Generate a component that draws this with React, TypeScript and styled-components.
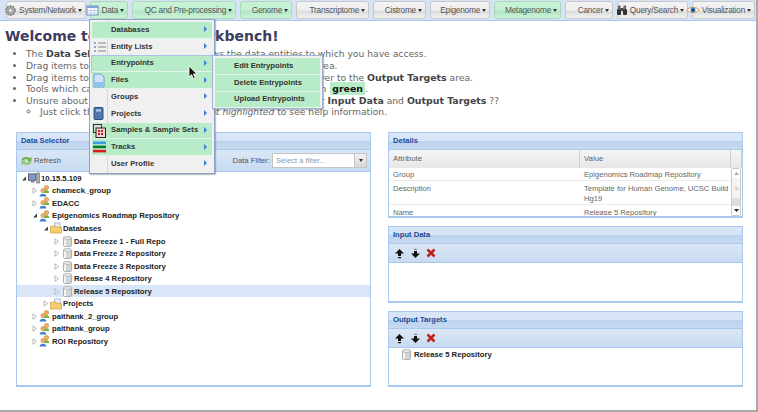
import React from 'react';
import styled, { createGlobalStyle } from 'styled-components';

const GlobalStyle = createGlobalStyle`
  html, body {
    margin: 0;
    padding: 0;
    background: #fff;
  }
`;

const Page = styled.div`
  position: relative;
  width: 756px;
  height: 410px;
  overflow: hidden;
  background: #fff;
  border-right: 2px solid #a8a8a8;
  border-bottom: 2px solid #a8a8a8;
  font-family: 'Liberation Sans', Arial, sans-serif;
`;

const Toolbar = styled.div`
  display: flex;
  align-items: center;
  gap: 4px;
  height: 20px;
  padding: 0 0 0 6px;
  background: #d6e3f4;
  border-bottom: 1px solid #a9c5ea;
`;

const ToolButton = styled.div<{ $green?: boolean; $width: number }>`
  display: flex;
  align-items: center;
  justify-content: flex-end;
  flex: none;
  gap: 2px;
  box-sizing: border-box;
  width: ${(p) => p.$width}px;
  height: 18px;
  padding: 0 3px;
  border: 1px solid ${(p) => (p.$green ? '#a9d8b9' : '#c8c8c8')};
  border-radius: 3px;
  background: ${(p) =>
    p.$green
      ? 'linear-gradient(#c8f2d6 0, #c4f0d2 50%, #b2e6c4 60%, #cdf3da 100%)'
      : 'linear-gradient(#f4f4f4 0, #eeeeee 50%, #dcdcdc 60%, #f2f2f2 100%)'};
  color: #555;
  font-size: 8.3px;
  letter-spacing: -0.25px;
  white-space: nowrap;
`;

const ToolIcon = styled.span`
  display: inline-flex;
  margin-right: auto;
`;

const Caret = styled.span`
  width: 0;
  height: 0;
  border-left: 2.5px solid transparent;
  border-right: 2.5px solid transparent;
  border-top: 3px solid #333;
`;

const Intro = styled.div`
  box-sizing: border-box;
  height: 111px;
  padding: 7px 0 0 5px;
  font-family: 'DejaVu Sans', Verdana, sans-serif;
  color: #666;
`;

const Heading = styled.h1`
  margin: 0 0 3px;
  font-size: 14px;
  line-height: 17px;
  font-weight: bold;
  color: #3c3c60;
  white-space: nowrap;
`;

const BulletList = styled.ul`
  margin: 0;
  padding: 0 0 0 21px;
  font-size: 9.2px;
  line-height: 11.8px;
  white-space: nowrap;

  ul {
    padding-left: 14px;
    list-style: circle;
    line-height: 10px;
  }

  b {
    color: #444;
    font-size: 9.4px;
  }
`;

const GreenWord = styled.b`
  margin-left: 1px;
  padding: 1px 2px;
  background: #b8ebc8;
  color: #111 !important;
`;

const Columns = styled.div`
  display: grid;
  grid-template-columns: 355px 355px;
  gap: 17px;
  padding-left: 16px;
`;

const Panel = styled.section<{ $height: number }>`
  display: flex;
  flex-direction: column;
  box-sizing: border-box;
  height: ${(p) => p.$height}px;
  overflow: hidden;
  border: 1px solid #a9c8ee;
  border-bottom-width: 2px;
  background: #fff;
`;

const PanelTitle = styled.div`
  flex: none;
  height: 17px;
  padding-left: 4px;
  background: linear-gradient(#d8e5f6 0, #d8e5f6 48%, #bcd2ee 52%, #c8daf2 100%);
  border-bottom: 1px solid #a9c8ee;
  box-sizing: border-box;
  color: #1f4a94;
  font-size: 7.6px;
  font-weight: bold;
  line-height: 16px;
`;

const SelectorBar = styled.div`
  display: flex;
  align-items: center;
  flex: none;
  box-sizing: border-box;
  height: 22px;
  padding: 0 3px;
  background: linear-gradient(#dbe7f6, #c8daf1);
  border-bottom: 1px solid #a9c8ee;
  color: #555;
  font-size: 7.7px;
`;

const RefreshLabel = styled.span`
  margin-left: 1px;
`;

const FilterLabel = styled.span`
  margin-left: auto;
  margin-right: 2px;
`;

const FilterInput = styled.div`
  box-sizing: border-box;
  width: 83px;
  height: 15px;
  padding-left: 3px;
  background: #fff;
  border: 1px solid #c4c4c4;
  color: #999;
  font-size: 7.6px;
  line-height: 13px;
`;

const FilterButton = styled.div`
  display: flex;
  align-items: center;
  justify-content: center;
  box-sizing: border-box;
  width: 12px;
  height: 15px;
  background: linear-gradient(#f2f2f2, #d8d8d8);
  border: 1px solid #c4c4c4;
  border-left: 0;
`;

const TreeRow = styled.div<{ $level: number; $selected?: boolean }>`
  display: flex;
  align-items: center;
  height: 12.55px;
  padding-left: ${(p) => 4 + p.$level * 11}px;
  background: ${(p) => (p.$selected ? '#d8e6f8' : 'transparent')};
  color: #222;
  font-size: 7.7px;
  font-weight: bold;
  white-space: nowrap;
`;

const ExpanderBox = styled.span`
  display: inline-flex;
  flex: none;
  width: 7px;
`;

const TreeIcon = styled.span`
  display: inline-flex;
  flex: none;
  justify-content: center;
  width: 12px;
  margin-right: 1px;
`;

const RightColumn = styled.div`
  display: flex;
  flex-direction: column;
  gap: 8px;
`;

const TableHead = styled.div`
  display: grid;
  grid-template-columns: 191px 151px 1fr;
  flex: none;
  height: 18px;
  background: linear-gradient(#f6f6f6, #e6e6e6);
  color: #666;
  font-size: 7.8px;
  line-height: 17px;

  span {
    padding-left: 4px;
    border-right: 1px solid #d0d0d0;
  }
`;

const TableBody = styled.div`
  display: flex;
  flex: 1;
  min-height: 0;
`;

const TableRows = styled.div`
  flex: 1;
`;

const TableRow = styled.div<{ $height: number; $pad: number }>`
  display: grid;
  grid-template-columns: 191px 1fr;
  box-sizing: border-box;
  height: ${(p) => p.$height}px;
  padding-top: ${(p) => p.$pad}px;
  border-bottom: 1px solid #ececec;
  color: #666;
  font-size: 7.6px;
  line-height: 9.5px;

  span {
    padding-left: 4px;
  }
`;

const Scrollbar = styled.div`
  display: flex;
  flex-direction: column;
  flex: none;
  width: 10px;
  margin-right: 1px;
  background: #ddd;
  border: 1px solid #ccc;
  border-radius: 2px;
  box-sizing: border-box;
`;

const ScrollEnd = styled.div`
  display: flex;
  align-items: center;
  justify-content: center;
  flex: none;
  height: 9px;
  background: #fff;
`;

const ScrollThumb = styled.div`
  display: flex;
  align-items: center;
  justify-content: center;
  flex: none;
  height: 20px;
  background: #f4f4f4;
  color: #aaa;
  font-size: 7px;
`;

const ScrollGap = styled.div`
  flex: 1;
`;

const MoveBar = styled.div`
  display: flex;
  align-items: center;
  flex: none;
  gap: 5px;
  box-sizing: border-box;
  height: 19px;
  padding-left: 5px;
  background: linear-gradient(#dbe7f6, #c8daf1);
  border-bottom: 1px solid #a9c8ee;
`;

const TargetRow = styled.div`
  display: flex;
  align-items: center;
  gap: 3px;
  padding: 1px 0 0 13px;
  color: #222;
  font-size: 7.7px;
  font-weight: bold;
`;

const Menu = styled.div`
  position: absolute;
  left: 89px;
  top: 19px;
  box-sizing: border-box;
  width: 126px;
  height: 155px;
  padding: 2px 2px 0;
  background: linear-gradient(90deg, #f0f0f0 17px, #d8d8d8 17px, #d8d8d8 18px, #f0f0f0 18px);
  border: 1px solid #8ba3c7;
  box-shadow: 1px 1px 1px rgba(80, 80, 80, 0.35);
`;

const MenuItem = styled.div<{ $green?: boolean; $hover?: boolean }>`
  position: relative;
  display: flex;
  align-items: center;
  box-sizing: border-box;
  height: 16.75px;
  padding: 0 0 1px 19px;
  background: ${(p) => (p.$green ? '#b8ebc8' : 'transparent')};
  border-bottom: 1px solid ${(p) => (p.$green ? '#e4f6ea' : 'transparent')};
  outline: ${(p) => (p.$hover ? '1px solid #a8c4ea' : 'none')};
  color: #333;
  font-size: 7.7px;
  font-weight: bold;
  white-space: nowrap;
`;

const MenuIcon = styled.span`
  position: absolute;
  left: 1px;
  top: 0;
  display: flex;
  align-items: center;
  height: 16px;
`;

const MenuArrow = styled.span`
  margin-left: auto;
  margin-right: 5px;
  width: 0;
  height: 0;
  border-left: 3.5px solid #3b7fd8;
  border-top: 3.5px solid transparent;
  border-bottom: 3.5px solid transparent;
`;

const SubMenu = styled.div`
  position: absolute;
  left: 212px;
  top: 55px;
  box-sizing: border-box;
  width: 111px;
  height: 54px;
  padding: 2px 2px 0;
  background: #f0f0f0;
  border: 1px solid #9db4d6;
  box-shadow: 1px 1px 1px rgba(80, 80, 80, 0.35);
`;

const SubItem = styled.div`
  display: flex;
  align-items: center;
  box-sizing: border-box;
  height: 16.8px;
  padding: 0 0 1px 19px;
  background: #b8ebc8;
  border-bottom: 1px solid #e4f6ea;
  color: #333;
  font-size: 7.7px;
  font-weight: bold;
  white-space: nowrap;
`;

const Pointer = styled.svg`
  position: absolute;
  left: 188px;
  top: 65px;
`;

const GearIcon = () => (
  <svg width="13" height="13" viewBox="0 0 13 13">
    <circle cx="6.5" cy="6.5" r="4.6" fill="#a8a8a8" stroke="#777" strokeWidth="1.6" strokeDasharray="1.6 1.3" />
    <circle cx="6.5" cy="6.5" r="2" fill="#e8e8e8" stroke="#888" strokeWidth="0.6" />
  </svg>
);

const TableIcon = () => (
  <svg width="13" height="13" viewBox="0 0 13 13">
    <rect x="1" y="2" width="11" height="9" fill="#fff" stroke="#6f8fc0" />
    <rect x="1" y="2" width="11" height="2" fill="#7ea3d8" />
    <path d="M1 6.5h11M1 9h11M5 4v7M8.5 4v7" stroke="#a8bfe0" strokeWidth="0.7" />
  </svg>
);

const BinocularsIcon = () => (
  <svg width="12" height="12" viewBox="0 0 12 12">
    <rect x="1" y="5" width="4" height="6" rx="1" fill="#333" />
    <rect x="7" y="5" width="4" height="6" rx="1" fill="#333" />
    <rect x="2" y="1.5" width="2.6" height="4" fill="#666" />
    <rect x="7.4" y="1.5" width="2.6" height="4" fill="#666" />
    <rect x="4.6" y="4" width="2.8" height="3" fill="#444" />
  </svg>
);

const EyeIcon = () => (
  <svg width="14" height="12" viewBox="0 0 14 12">
    <path d="M0.8 6C3 2.6 11 2.6 13.2 6C11 9.4 3 9.4 0.8 6Z" fill="#fff" stroke="#d49a4a" />
    <circle cx="7" cy="6" r="2.5" fill="#3b78c8" />
    <circle cx="7" cy="6" r="1" fill="#123" />
  </svg>
);

const ListIcon = () => (
  <svg width="13" height="12" viewBox="0 0 13 12">
    <path d="M1 2h2M1 6h2M1 10h2" stroke="#6c94d0" strokeWidth="1.5" />
    <path d="M5 2h8M5 6h8M5 10h8" stroke="#888" strokeWidth="1" />
  </svg>
);

const FileIcon = () => (
  <svg width="12" height="15" viewBox="0 0 12 15">
    <path d="M1 1h7l3 3v10H1Z" fill="#cfe4fb" stroke="#6f9fd8" />
    <rect x="2" y="9" width="8" height="4" fill="#8fc0f2" />
  </svg>
);

const BookIcon = () => (
  <svg width="11" height="13" viewBox="0 0 11 13">
    <rect x="1" y="0.5" width="9" height="12" rx="1" fill="#4f78b0" stroke="#2c4f80" />
    <rect x="3" y="2.5" width="5" height="2" fill="#b7cdea" />
  </svg>
);

const SamplesIcon = () => (
  <svg width="13" height="14" viewBox="0 0 13 14">
    <rect x="0.5" y="0.5" width="8" height="8" fill="#ddd" stroke="#333" />
    <rect x="3" y="4" width="9.5" height="9.5" fill="#f4d8d8" stroke="#222" />
    <path d="M5 6h2v2H5ZM8 6h2v2H8ZM5 9h2v2H5ZM8 9h2v2H8Z" fill="#d01818" />
  </svg>
);

const TracksIcon = () => (
  <svg width="13" height="12" viewBox="0 0 13 12">
    <rect x="0" y="0.5" width="13" height="2.6" fill="#3a9ae8" />
    <rect x="0" y="4.6" width="13" height="2.6" fill="#0c7a2c" />
    <rect x="0" y="8.8" width="13" height="2.6" fill="#e01818" />
  </svg>
);

const RefreshIcon = () => (
  <svg width="13" height="12" viewBox="0 0 13 12">
    <path d="M1.5 5C2.5 2 6.5 1 9.5 3L11.5 2V6.5H7L8.5 5C6.5 3.8 4.5 4 3.5 5.6Z" fill="#6cb04a" />
    <path d="M11.5 7C10.5 10 6.5 11 3.5 9L1.5 10V5.5H6L4.5 7C6.5 8.2 8.5 8 9.5 6.4Z" fill="#8cc870" />
  </svg>
);

const ServerIcon = () => (
  <svg width="12" height="12" viewBox="0 0 13 12">
    <rect x="0.5" y="1.5" width="8" height="7" fill="#7f9ac8" stroke="#556" />
    <rect x="3" y="9" width="4" height="2" fill="#889" />
    <rect x="9.5" y="0.5" width="3" height="11" fill="#aaa" stroke="#666" strokeWidth="0.6" />
  </svg>
);

const GroupIcon = () => (
  <svg width="12" height="12" viewBox="0 0 12 12">
    <circle cx="7.5" cy="2.6" r="2.2" fill="#f0b060" stroke="#b87830" strokeWidth="0.5" />
    <path d="M5 7C5 4.8 10 4.8 10 7V8H5Z" fill="#68b848" />
    <circle cx="4" cy="5.6" r="2.1" fill="#f0b060" stroke="#b87830" strokeWidth="0.5" />
    <path d="M0.6 11.5C0.6 7.8 7.4 7.8 7.4 11.5Z" fill="#3f7fd0" />
  </svg>
);

const FolderIcon = () => (
  <svg width="12" height="12" viewBox="0 0 13 12">
    <rect x="5" y="0.5" width="6" height="6" fill="#e6eef8" stroke="#7f9ac8" strokeWidth="0.6" />
    <path d="M0.5 4h3l1-1h1v2h7v6.5H0.5Z" fill="#f4cf70" stroke="#c89c3c" strokeWidth="0.7" />
  </svg>
);

const DatabaseIcon = () => (
  <svg width="9" height="11" viewBox="0 0 9 11">
    <rect x="0.5" y="1" width="8" height="9.5" rx="1.5" fill="#d4d4d4" stroke="#999" strokeWidth="0.7" />
    <ellipse cx="4.5" cy="2" rx="4" ry="1.4" fill="#eee" stroke="#999" strokeWidth="0.6" />
    <rect x="1" y="3.5" width="2" height="6.5" fill="#f4f4f4" />
  </svg>
);

const UpIcon = () => (
  <svg width="11" height="11" viewBox="0 0 11 11">
    <path d="M5.5 1L10 5.5H7V8H4V5.5H1Z" fill="#111" />
    <rect x="4" y="9" width="3" height="1.2" fill="#111" />
  </svg>
);

const DownIcon = () => (
  <svg width="11" height="11" viewBox="0 0 11 11">
    <rect x="4" y="0.8" width="3" height="1.2" fill="#888" />
    <path d="M5.5 10L10 5.5H7V3H4V5.5H1Z" fill="#111" />
  </svg>
);

const RemoveIcon = () => (
  <svg width="10" height="10" viewBox="0 0 10 10">
    <path d="M1.5 1.5L8.5 8.5M8.5 1.5L1.5 8.5" stroke="#c0201c" strokeWidth="2.5" />
  </svg>
);

const Expander = ({ open }: { open?: boolean }) => (
  <ExpanderBox>
    <svg width="6" height="7" viewBox="0 0 6 7">
      {open ? (
        <path d="M5 1.5V5.5H1Z" fill="#444" />
      ) : (
        <path d="M1 0.8L4.6 3.5L1 6.2Z" fill="#fff" stroke="#999" strokeWidth="0.7" />
      )}
    </svg>
  </ExpanderBox>
);

const MoveButtons = () => (
  <MoveBar>
    <UpIcon />
    <DownIcon />
    <RemoveIcon />
  </MoveBar>
);

const toolButtons = [
  { label: 'System/Network', width: 80, icon: <GearIcon /> },
  { label: 'Data', width: 38, icon: <TableIcon />, green: true },
  { label: 'QC and Pre-processing', width: 104, green: true },
  { label: 'Genome', width: 52, green: true },
  { label: 'Transcriptome', width: 73 },
  { label: 'Cistrome', width: 53 },
  { label: 'Epigenome', width: 60 },
  { label: 'Metagenome', width: 67, green: true },
  { label: 'Cancer', width: 48 },
  { label: 'Query/Search', width: 71, icon: <BinocularsIcon /> },
  { label: 'Visualization', width: 63, icon: <EyeIcon /> },
];

const menuItems = [
  { label: 'Databases', green: true },
  { label: 'Entity Lists', icon: <ListIcon /> },
  { label: 'Entrypoints', green: true, hover: true },
  { label: 'Files', green: true, icon: <FileIcon /> },
  { label: 'Groups' },
  { label: 'Projects', icon: <BookIcon /> },
  { label: 'Samples & Sample Sets', green: true, icon: <SamplesIcon /> },
  { label: 'Tracks', green: true, icon: <TracksIcon /> },
  { label: 'User Profile' },
];

const treeRows = [
  { label: '10.15.5.109', level: 0, open: true, icon: <ServerIcon /> },
  { label: 'chameck_group', level: 1, icon: <GroupIcon /> },
  { label: 'EDACC', level: 1, icon: <GroupIcon /> },
  { label: 'Epigenomics Roadmap Repository', level: 1, open: true, icon: <GroupIcon /> },
  { label: 'Databases', level: 2, open: true, icon: <FolderIcon /> },
  { label: 'Data Freeze 1 - Full Repo', level: 3, icon: <DatabaseIcon /> },
  { label: 'Data Freeze 2 Repository', level: 3, icon: <DatabaseIcon /> },
  { label: 'Data Freeze 3 Repository', level: 3, icon: <DatabaseIcon /> },
  { label: 'Release 4 Repository', level: 3, icon: <DatabaseIcon /> },
  { label: 'Release 5 Repository', level: 3, selected: true, icon: <DatabaseIcon /> },
  { label: 'Projects', level: 2, icon: <FolderIcon /> },
  { label: 'paithank_2_group', level: 1, icon: <GroupIcon /> },
  { label: 'paithank_group', level: 1, icon: <GroupIcon /> },
  { label: 'ROI Repository', level: 1, icon: <GroupIcon /> },
];

export default function App() {
  return (
    <Page>
      <GlobalStyle />
      <Toolbar>
        {toolButtons.map((b) => (
          <ToolButton key={b.label} $width={b.width} $green={b.green}>
            {b.icon && <ToolIcon>{b.icon}</ToolIcon>}
            {b.label}
            <Caret />
          </ToolButton>
        ))}
      </Toolbar>

      <Intro>
        <Heading>Welcome to Genboree Workbench!</Heading>
        <BulletList>
          <li>
            The <b>Data Selector</b> tree on the left, shows the data entities to which you have access.
          </li>
          <li>Drag items to the Input Data list from the Data Selector panel area.</li>
          <li>
            Drag items to the Input Data lists, and from the Data Selector over to the <b>Output Targets</b> area.
          </li>
          <li>
            Tools which can be used with the selected data are now shown in <GreenWord>green</GreenWord>.
          </li>
          <li>
            Unsure about what each of the tools would really need to use for <b>Input Data</b> and <b>Output Targets</b> ??
            <ul>
              <li>
                Just click the tool's icon even if it is <i>not highlighted</i> to see help information.
              </li>
            </ul>
          </li>
        </BulletList>
      </Intro>

      <Columns>
        <Panel $height={255}>
          <PanelTitle>Data Selector</PanelTitle>
          <SelectorBar>
            <RefreshIcon />
            <RefreshLabel>Refresh</RefreshLabel>
            <FilterLabel>Data Filter:</FilterLabel>
            <FilterInput>Select a filter...</FilterInput>
            <FilterButton>
              <Caret />
            </FilterButton>
          </SelectorBar>
          <div>
            {treeRows.map((r) => (
              <TreeRow key={r.label} $level={r.level} $selected={r.selected}>
                <Expander open={r.open} />
                <TreeIcon>{r.icon}</TreeIcon>
                {r.label}
              </TreeRow>
            ))}
          </div>
        </Panel>

        <RightColumn>
          <Panel $height={86}>
            <PanelTitle>Details</PanelTitle>
            <TableHead>
              <span>Attribute</span>
              <span>Value</span>
              <span />
            </TableHead>
            <TableBody>
              <TableRows>
                <TableRow $height={13} $pad={2}>
                  <span>Group</span>
                  <span>Epigenomics Roadmap Repository</span>
                </TableRow>
                <TableRow $height={24} $pad={3}>
                  <span>Description</span>
                  <span>Template for Human Genome, UCSC Build Hg19</span>
                </TableRow>
                <TableRow $height={14} $pad={3}>
                  <span>Name</span>
                  <span>Release 5 Repository</span>
                </TableRow>
              </TableRows>
              <Scrollbar>
                <ScrollEnd>
                  <svg width="5" height="3" viewBox="0 0 5 3">
                    <path d="M2.5 0L5 3H0Z" fill="#aaa" />
                  </svg>
                </ScrollEnd>
                <ScrollThumb>≡</ScrollThumb>
                <ScrollGap />
                <ScrollEnd>
                  <svg width="5" height="3" viewBox="0 0 5 3">
                    <path d="M0 0H5L2.5 3Z" fill="#222" />
                  </svg>
                </ScrollEnd>
              </Scrollbar>
            </TableBody>
          </Panel>

          <Panel $height={77}>
            <PanelTitle>Input Data</PanelTitle>
            <MoveButtons />
          </Panel>

          <Panel $height={76}>
            <PanelTitle>Output Targets</PanelTitle>
            <MoveButtons />
            <TargetRow>
              <DatabaseIcon />
              Release 5 Repository
            </TargetRow>
          </Panel>
        </RightColumn>
      </Columns>

      <Menu>
        {menuItems.map((m) => (
          <MenuItem key={m.label} $green={m.green} $hover={m.hover}>
            {m.icon && <MenuIcon>{m.icon}</MenuIcon>}
            {m.label}
            <MenuArrow />
          </MenuItem>
        ))}
      </Menu>

      <SubMenu>
        <SubItem>Edit Entrypoints</SubItem>
        <SubItem>Delete Entrypoints</SubItem>
        <SubItem>Upload Entrypoints</SubItem>
      </SubMenu>

      <Pointer width="10" height="15" viewBox="0 0 10 15">
        <path d="M1 1V12L3.6 9.6L5.4 13.6L7.2 12.8L5.4 9H8.8Z" fill="#111" stroke="#fff" strokeWidth="0.8" />
      </Pointer>
    </Page>
  );
}
